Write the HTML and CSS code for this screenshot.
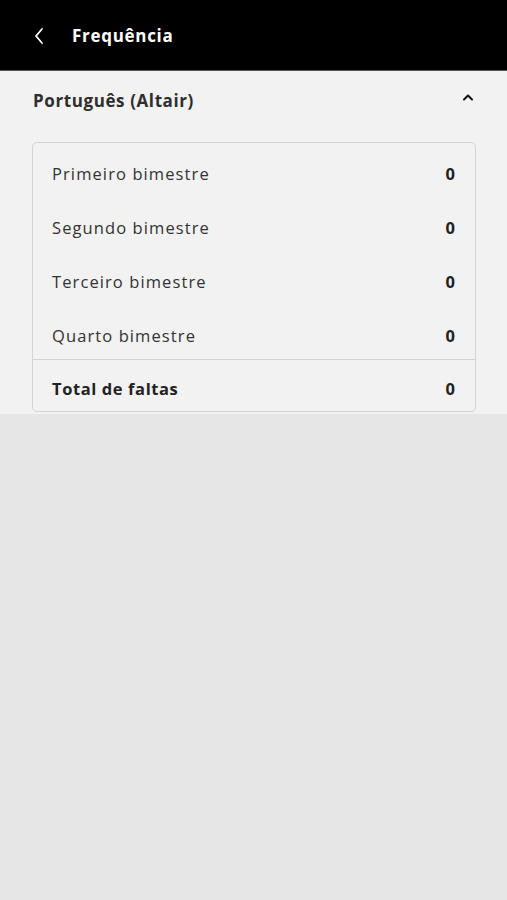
FILE: index.html
```html
<!DOCTYPE html>
<html lang="pt-BR">
<head>
<meta charset="utf-8">
<title>Frequência</title>
<link rel="stylesheet" href="styles.css">
</head>
<body>
<header class="topbar">
  <button class="back" aria-label="Voltar">
    <svg width="12" height="18" viewBox="0 0 12 18"><path d="M9 2 L3 9 L9 16" fill="none" stroke="#fff" stroke-width="1.8" stroke-linecap="round" stroke-linejoin="round"/></svg>
  </button>
  <h1 class="title">Frequência</h1>
</header>
<section class="panel">
  <div class="acc-head">
    <h2 class="subject">Português (Altair)</h2>
    <svg class="chev" width="12" height="8" viewBox="0 0 12 8"><path d="M2 6.5 L6 2.5 L10 6.5" fill="none" stroke="#111" stroke-width="2" stroke-linecap="round" stroke-linejoin="round"/></svg>
  </div>
  <div class="card">
    <ul class="rows">
      <li class="row"><span>Primeiro bimestre</span><b>0</b></li>
      <li class="row"><span>Segundo bimestre</span><b>0</b></li>
      <li class="row"><span>Terceiro bimestre</span><b>0</b></li>
      <li class="row"><span>Quarto bimestre</span><b>0</b></li>
    </ul>
    <div class="row total"><b class="total-label">Total de faltas</b><b>0</b></div>
  </div>
</section>
</body>
</html>
```
FILE: styles.css
```css
html, body {
  margin: 0;
  padding: 0;
  background: #e6e6e6;
  font-family: "Open Sans", "DejaVu Sans", sans-serif;
  color: #333;
}
.topbar {
  height: 71px;
  background: #000;
  display: flex;
  align-items: center;
  padding-left: 33px;
  padding-top: 1px;
  box-sizing: border-box;
  border-bottom: 1px solid #555;
}
.back {
  background: none;
  border: 0;
  padding: 0;
  width: 12px;
  height: 18px;
  display: flex;
}
.title {
  margin: 0 0 0 27px;
  color: #fff;
  font-size: 17px;
  font-weight: 700;
  letter-spacing: 0.7px;
}
.panel {
  background: #f2f2f2;
  padding: 0 31px 2px 32px;
}
.acc-head {
  height: 58px;
  display: flex;
  align-items: center;
  justify-content: space-between;
  padding-left: 1px;
}
.subject {
  margin: 0;
  font-size: 17px;
  font-weight: 700;
  color: #2e2e2e;
  letter-spacing: 0.6px;
}
.chev {
  margin-right: 2px;
  margin-top: -6px;
}
.card {
  margin-top: 13px;
  border: 1px solid #d3d3d3;
  border-radius: 5px;
  background: #f2f2f2;
}
.rows {
  list-style: none;
  margin: 0;
  padding: 6px 0 0;
  display: flex;
  flex-direction: column;
  gap: 6px;
}
.row {
  height: 48px;
  display: flex;
  align-items: center;
  justify-content: space-between;
  padding: 0 20px 0 19px;
  font-size: 16.5px;
  letter-spacing: 1.1px;
  color: #333;
}
.row b {
  font-weight: 700;
  color: #222;
  letter-spacing: 0;
}
.row .total-label {
  letter-spacing: 0.6px;
}
.total {
  border-top: 1px solid #d3d3d3;
  height: 52px;
  box-sizing: border-box;
  padding-top: 6px;
}
```
